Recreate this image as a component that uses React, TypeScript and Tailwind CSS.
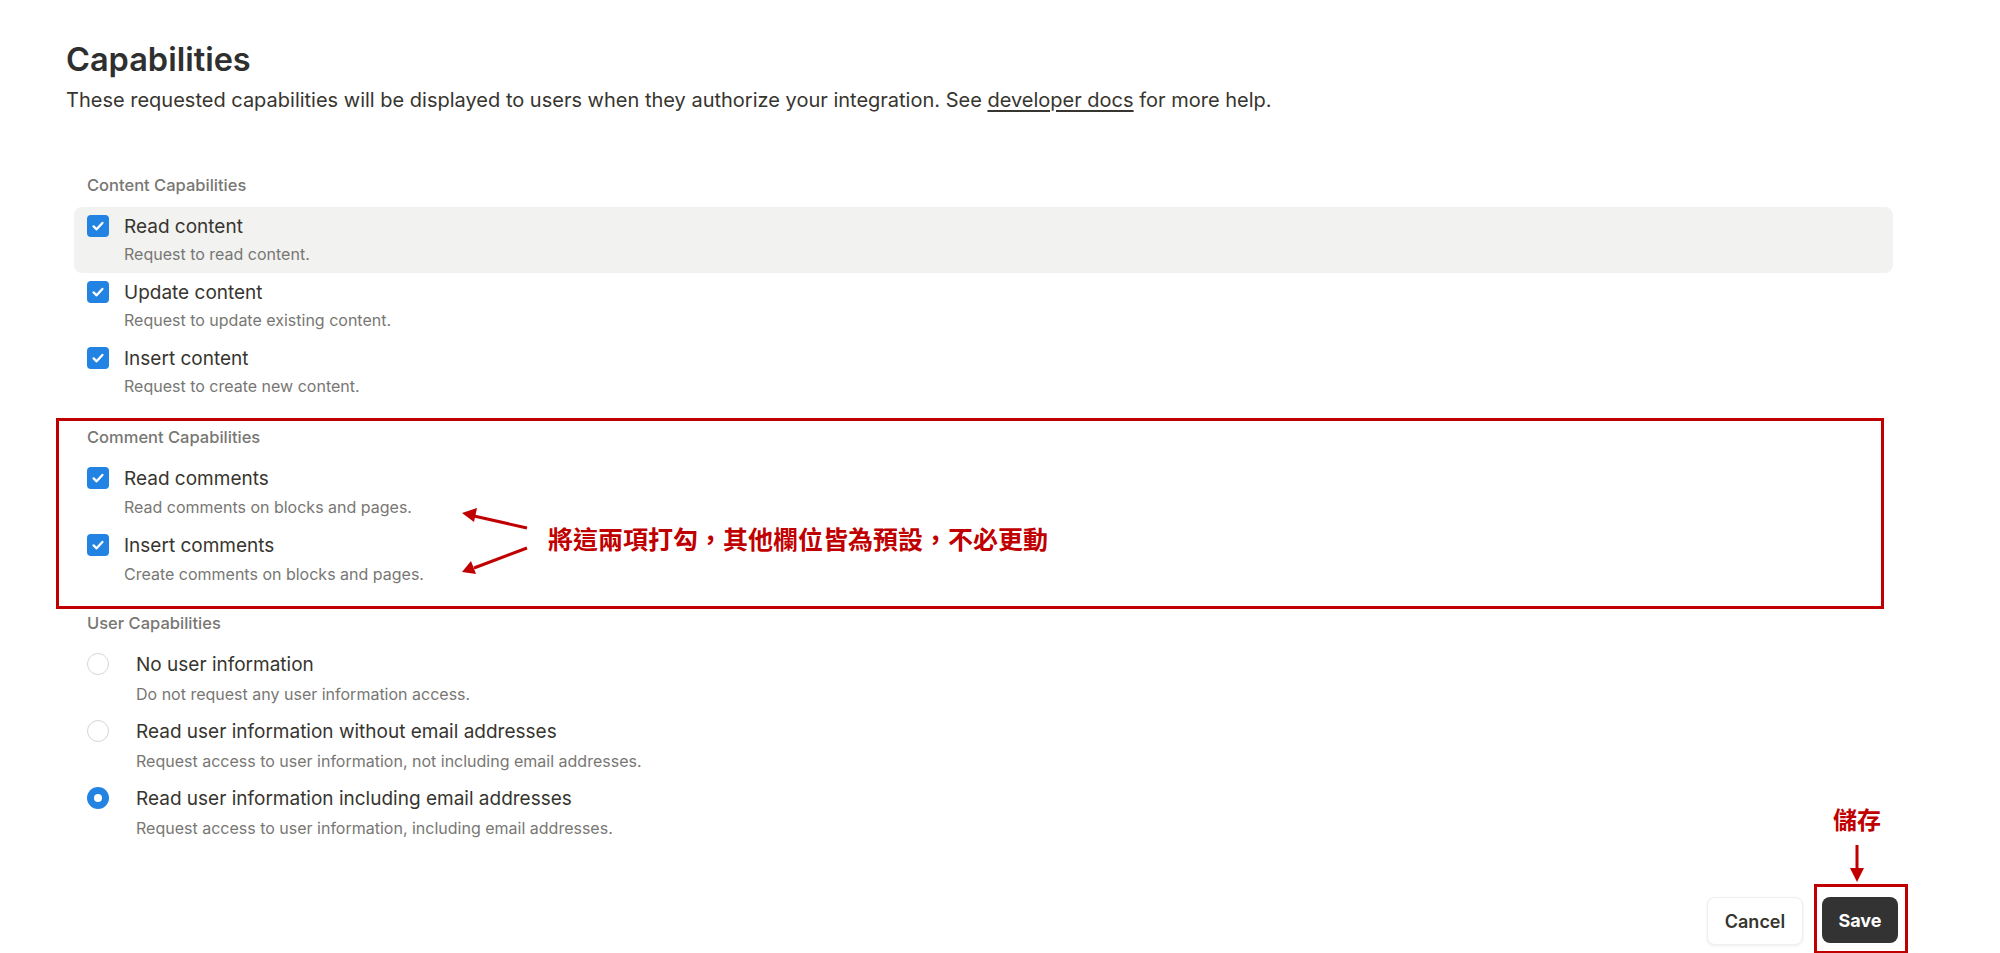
import React from 'react';

type Item = { title: string; desc: string; highlight?: boolean; checked?: boolean };

const content: Item[] = [
  { title: 'Read content', desc: 'Request to read content.', highlight: true },
  { title: 'Update content', desc: 'Request to update existing content.' },
  { title: 'Insert content', desc: 'Request to create new content.' },
];

const comments: Item[] = [
  { title: 'Read comments', desc: 'Read comments on blocks and pages.' },
  { title: 'Insert comments', desc: 'Create comments on blocks and pages.' },
];

const users: Item[] = [
  { title: 'No user information', desc: 'Do not request any user information access.' },
  {
    title: 'Read user information without email addresses',
    desc: 'Request access to user information, not including email addresses.',
  },
  {
    title: 'Read user information including email addresses',
    desc: 'Request access to user information, including email addresses.',
    checked: true,
  },
];

function Checkbox() {
  return (
    <span className="flex h-[22px] w-[22px] shrink-0 items-center justify-center rounded-[4px] bg-[#2383e2]">
      <svg viewBox="0 0 16 16" className="h-[16px] w-[16px]" fill="none">
        <path d="M3.6 8.4 6.6 11.3 12.4 4.9" stroke="white" strokeWidth="2.3" strokeLinecap="round" strokeLinejoin="round" />
      </svg>
    </span>
  );
}

function Radio({ checked }: { checked?: boolean }) {
  return checked ? (
    <span className="flex h-[22px] w-[22px] shrink-0 items-center justify-center rounded-full bg-[#2383e2]">
      <span className="h-[8px] w-[8px] rounded-full bg-white" />
    </span>
  ) : (
    <span className="h-[22px] w-[22px] shrink-0 rounded-full border-[1.5px] border-[#d6d6d4] bg-white" />
  );
}

function Row({ item, radio, tall }: { item: Item; radio?: boolean; tall?: boolean }) {
  return (
    <div
      className={`flex items-start px-[13px] pt-[8px] rounded-[8px] ${tall ? 'h-[67px]' : 'h-[66px]'} ${
        item.highlight ? 'bg-[#f2f2f1]' : ''
      } ${radio ? 'gap-[27px]' : 'gap-[15px]'}`}
    >
      {radio ? <Radio checked={item.checked} /> : <Checkbox />}
      <div>
        <div className="text-[19px] leading-[24px] text-[#37352f]">{item.title}</div>
        <div className={`${radio ? 'mt-[7px]' : tall ? 'mt-[6px]' : 'mt-[5px]'} text-[16px] leading-[20px] text-[#787774]`}>
          {item.desc}
        </div>
      </div>
    </div>
  );
}

function Section({
  label,
  items,
  radio,
  tall,
  className,
}: {
  label: string;
  items: Item[];
  radio?: boolean;
  tall?: boolean;
  className?: string;
}) {
  return (
    <div className={className}>
      <div className="mb-[12px] px-[13px] text-[16.5px] font-medium leading-[20px] text-[#787774]">{label}</div>
      {items.map((it) => (
        <Row key={it.title} item={it} radio={radio} tall={tall} />
      ))}
    </div>
  );
}

export default function App() {
  return (
    <div className="relative h-[953px] overflow-hidden bg-white font-['Inter','Noto_Sans',sans-serif]">
      <div className="pl-[66px] pr-[107px] pt-[38px]">
        <h1 className="text-[32.5px] font-semibold leading-[44px] text-[#2f2f2f]">Capabilities</h1>
        <p className="mt-[5px] text-[20px] leading-[26px] text-[#37352f]">
          These requested capabilities will be displayed to users when they authorize your integration. See{' '}
          <a className="underline underline-offset-[3px]" href="#">
            developer docs
          </a>{' '}
          for more help.
        </p>

        <div className="ml-[8px] mt-[62px]">
          <Section label="Content Capabilities" items={content} />
          <Section label="Comment Capabilities" items={comments} tall className="mt-[22px]" />
          <Section label="User Capabilities" items={users} radio tall className="mt-[20px]" />
        </div>

        <div className="mr-[-5px] mt-[51px] flex justify-end gap-[19px]">
          <button className="h-[48px] w-[96px] rounded-[8px] border border-[#f0f0ef] bg-white text-[18px] font-semibold text-[#37352f] shadow-[0_1px_3px_rgba(0,0,0,0.08)]">
            Cancel
          </button>
          <button className="h-[46px] w-[76px] rounded-[8px] bg-[#333333] text-[18px] font-bold text-white">
            Save
          </button>
        </div>
      </div>

      {/* annotations */}
      <div className="pointer-events-none absolute left-[56px] top-[418px] h-[191px] w-[1828px] border-[3px] border-[#c00000]" />
      <div className="pointer-events-none absolute left-[548px] top-[522px] text-[25px] font-bold leading-[32px] text-[#c00000] font-['Noto_Sans_CJK_TC','Noto_Sans_CJK_SC',sans-serif]">
        將這兩項打勾，其他欄位皆為預設，不必更動
      </div>
      <div className="pointer-events-none absolute left-[1833px] top-[803px] text-[24px] font-bold leading-[32px] text-[#c00000] font-['Noto_Sans_CJK_TC','Noto_Sans_CJK_SC',sans-serif]">
        儲存
      </div>
      <div className="pointer-events-none absolute left-[1814px] top-[884px] h-[70px] w-[94px] border-[3px] border-[#c00000]" />
      <svg className="pointer-events-none absolute left-0 top-0" width="2000" height="953">
        <g stroke="#c00000" strokeWidth="3" fill="#c00000">
          <line x1="527" y1="528" x2="474" y2="516" />
          <polygon points="462,513 477,508 474,522" stroke="none" />
          <line x1="527" y1="548" x2="474" y2="568" />
          <polygon points="462,572 471,561 476,574" stroke="none" />
          <line x1="1857" y1="845" x2="1857" y2="870" />
          <polygon points="1850,868 1864,868 1857,882" stroke="none" />
        </g>
      </svg>
    </div>
  );
}
